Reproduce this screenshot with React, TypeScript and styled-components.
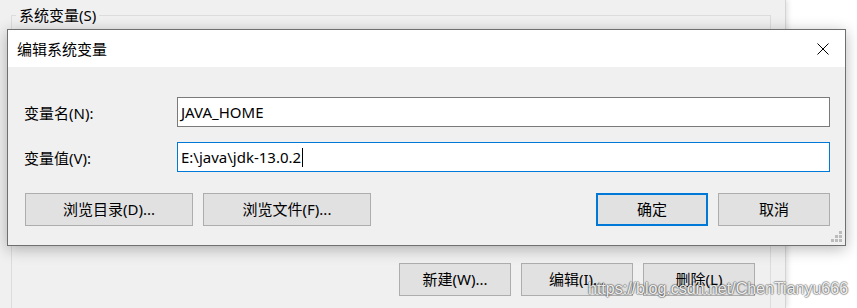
import React from 'react';
import styled, { createGlobalStyle } from 'styled-components';

const GlobalStyle = createGlobalStyle`
  html, body {
    margin: 0;
    padding: 0;
    background: #fff;
  }
  body {
    font-family: "Noto Sans", "Noto Sans CJK SC", sans-serif;
    font-size: 15px;
    color: #000;
  }
`;

const Desktop = styled.div`
  position: relative;
  width: 857px;
  height: 308px;
  overflow: hidden;
  background: #fff;
`;

const BackWindow = styled.div`
  width: 786px;
  height: 100%;
  box-sizing: border-box;
  background: #f0f0f0;
  border-right: 1px solid #d4d4d4;
  box-shadow: 2px 0 5px rgba(0, 0, 0, 0.12);
  padding: 5px 0 0 11px;
`;

const GroupBox = styled.fieldset`
  margin: 0;
  padding: 0 15px 0 0;
  width: 760px;
  height: 340px;
  box-sizing: border-box;
  border: 1px solid #dcdcdc;
  display: flex;
  flex-direction: column;
`;

const GroupLegend = styled.legend`
  margin-left: 4px;
  padding: 0 3px;
  line-height: 20px;
  font-size: 15px;
  color: #000;
`;

const ListSpace = styled.div`
  height: 238px;
`;

const ButtonRow = styled.div<{ $align?: 'start' | 'end' }>`
  display: flex;
  gap: 10px;
  justify-content: ${p => (p.$align === 'end' ? 'flex-end' : 'flex-start')};
`;

const Button = styled.button<{ $width: number; $primary?: boolean }>`
  width: ${p => p.$width}px;
  height: 33px;
  box-sizing: border-box;
  margin: 0;
  padding: 0;
  background: #e1e1e1;
  border: ${p => (p.$primary ? '2px solid #0078d7' : '1px solid #adadad')};
  font-family: "Noto Sans", "Noto Sans CJK SC", sans-serif;
  font-size: 15px;
  color: #000;
  line-height: 1;
`;

const Dialog = styled.div`
  position: absolute;
  left: 7px;
  top: 29px;
  width: 839px;
  height: 217px;
  box-sizing: border-box;
  border: 1px solid #6f6f6f;
  background: #f0f0f0;
  box-shadow: 0 3px 14px rgba(0, 0, 0, 0.28);
  display: flex;
  flex-direction: column;
`;

const TitleBar = styled.div`
  height: 37px;
  flex: none;
  background: #fff;
  display: flex;
  align-items: center;
  justify-content: space-between;
  padding-left: 9px;
`;

const Title = styled.span`
  font-size: 15px;
  color: #000;
`;

const CloseBox = styled.div`
  width: 46px;
  height: 37px;
  display: flex;
  align-items: center;
  justify-content: center;
  margin-right: -1px;
`;

const Body = styled.div`
  flex: 1;
  position: relative;
  padding: 30px 15px 0 16px;
`;

const FieldGrid = styled.div`
  display: grid;
  grid-template-columns: 153px 1fr;
  grid-auto-rows: 30px;
  row-gap: 15px;
  align-items: center;
`;

const Label = styled.label`
  font-size: 15px;
  color: #000;
`;

const Input = styled.div<{ $focused?: boolean }>`
  height: 30px;
  box-sizing: border-box;
  border: 1px solid ${p => (p.$focused ? '#0078d7' : '#7a7a7a')};
  background: #fff;
  display: flex;
  align-items: center;
  padding-left: 3px;
  font-size: 15px;
  color: #000;
`;

const Caret = styled.span`
  display: inline-block;
  width: 1px;
  height: 19px;
  background: #000;
  margin-left: 1px;
`;

const DialogButtons = styled.div`
  margin-top: 21px;
  padding-left: 1px;
  display: flex;
  justify-content: space-between;
`;

const Grip = styled.svg`
  position: absolute;
  right: 2px;
  bottom: 2px;
`;

const Watermark = styled.div`
  position: absolute;
  left: 588px;
  top: 279px;
  font-family: "Liberation Sans", Arial, sans-serif;
  font-size: 16px;
  line-height: 20px;
  color: rgba(255, 255, 255, 0.9);
  text-shadow:
    1px 0 1px rgba(0, 0, 0, 0.3),
    -1px 0 1px rgba(0, 0, 0, 0.3),
    0 1px 1px rgba(0, 0, 0, 0.3),
    0 -1px 1px rgba(0, 0, 0, 0.3);
  white-space: nowrap;
  pointer-events: none;
`;

const CloseIcon = () => (
  <svg width="12" height="12" viewBox="0 0 12 12">
    <path d="M0.5 0.5 L11.5 11.5 M11.5 0.5 L0.5 11.5" stroke="#000" strokeWidth="1" fill="none" />
  </svg>
);

const GripIcon = () => (
  <Grip width="12" height="12" viewBox="0 0 12 12">
    {[
      [8, 0],
      [4, 4],
      [8, 4],
      [0, 8],
      [4, 8],
      [8, 8],
    ].map(([x, y]) => (
      <rect key={`${x}-${y}`} x={x} y={y} width="3" height="3" fill="#bcbcbc" />
    ))}
  </Grip>
);

export default function App() {
  return (
    <>
      <GlobalStyle />
      <Desktop>
        <BackWindow>
          <GroupBox>
            <GroupLegend>系统变量(S)</GroupLegend>
            <ListSpace />
            <ButtonRow $align="end">
              <Button $width={112}>新建(W)...</Button>
              <Button $width={112}>编辑(I)...</Button>
              <Button $width={112}>删除(L)</Button>
            </ButtonRow>
          </GroupBox>
        </BackWindow>

        <Dialog>
          <TitleBar>
            <Title>编辑系统变量</Title>
            <CloseBox>
              <CloseIcon />
            </CloseBox>
          </TitleBar>
          <Body>
            <FieldGrid>
              <Label>变量名(N):</Label>
              <Input>JAVA_HOME</Input>
              <Label>变量值(V):</Label>
              <Input $focused>
                E:\java\jdk-13.0.2
                <Caret />
              </Input>
            </FieldGrid>
            <DialogButtons>
              <ButtonRow>
                <Button $width={168}>浏览目录(D)...</Button>
                <Button $width={168}>浏览文件(F)...</Button>
              </ButtonRow>
              <ButtonRow>
                <Button $width={112} $primary>确定</Button>
                <Button $width={112}>取消</Button>
              </ButtonRow>
            </DialogButtons>
            <GripIcon />
          </Body>
        </Dialog>

        <Watermark>https://blog.csdn.net/ChenTianyu666</Watermark>
      </Desktop>
    </>
  );
}
